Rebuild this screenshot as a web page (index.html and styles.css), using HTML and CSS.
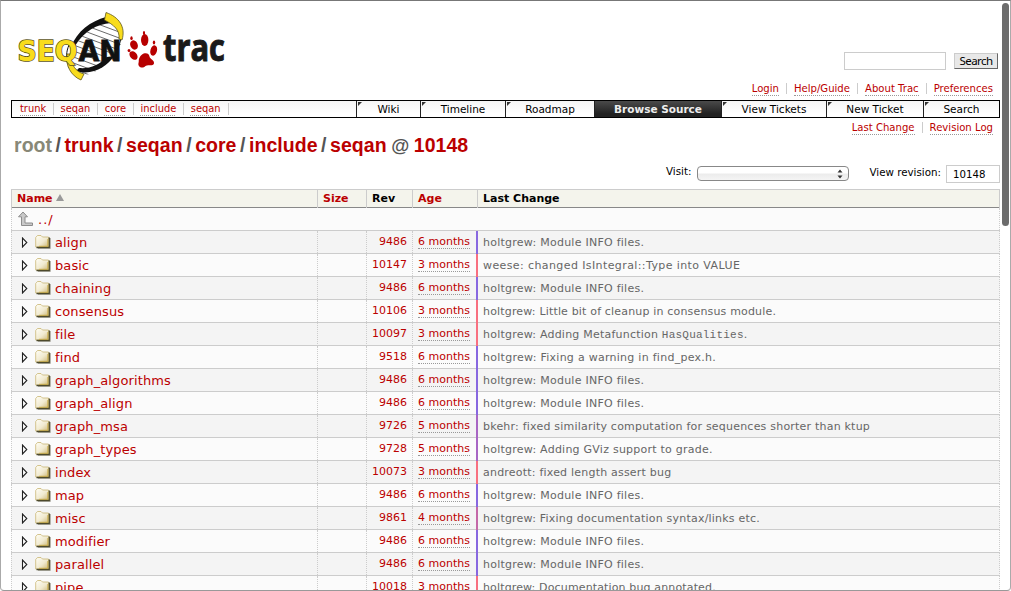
FILE: index.html
```html
<!DOCTYPE html>
<html lang="en">
<head>
<meta charset="utf-8">
<title>seqan/core/include/seqan – SeqAn Trac</title>
<link rel="stylesheet" href="styles.css">
</head>
<body>
<svg class="defs" width="0" height="0" aria-hidden="true">
  <defs>
    <linearGradient id="fold" x1="0" y1="0" x2="1" y2="1"><stop offset="0" stop-color="#fffef6"/><stop offset=".55" stop-color="#f1ead0"/><stop offset="1" stop-color="#cdb878"/></linearGradient>
    <symbol id="folder" viewBox="0 0 16 16">
      <path d="M3 14.500H15.500V4" fill="none" stroke="#b5b4ac" stroke-width="1"/>
      <path d="M.700 3.500 2.500 1.500H6L7.500 3H13.500V13H.700Z" fill="url(#fold)" stroke="#c9b673" stroke-width=".8"/>
      <path d="M1.500 13.500H14.300V3.500" fill="none" stroke="#4d4a2c" stroke-width="1.300"/>
      <path d="M12.800 5V12.300H4" fill="none" stroke="#c6a83e" stroke-width=".8"/>
    </symbol>
    <symbol id="tri" viewBox="0 0 8 11"><path d="M2.500 1V10L6.800 5.500Z" fill="#fff" stroke="#222" stroke-width="1.100"/></symbol>
  </defs>
</svg>
<div class="window">
  <header class="banner">
    <svg class="logo" width="220" height="80" viewBox="10 5 220 80">
      <defs><clipPath id="leaf"><path d="M68 70C66 50 84 27 110 22C124 24 126 38 116 54C106 66 92 76 81 75Z"/></clipPath></defs>
      <path d="M68 70C66 50 84 27 113 22C124 26 126 38 116 54C106 66 92 76 81 75Z" fill="#fff"/>
      <g clip-path="url(#leaf)" stroke="#444" stroke-width=".8">
        <path d="M60 10 130 36M60 16 130 42M60 22 130 48M60 28 130 54M60 34 130 60M60 40 130 66M60 46 130 72M60 52 130 78M60 58 130 84M60 64 130 90"/>
      </g>
      <path d="M71 47C77 31 91 21 106 17L111 23C97 24 84 31 75 46Z" fill="#111"/>
      <path d="M76 71C92 76 107 67 114 56L107 57C99 65 90 69 79 68Z" fill="#111"/>
      <path d="M121 31C122 38 119 48 114 56" fill="none" stroke="#111" stroke-width="1"/>
      <path d="M69 45C66 52 66 58 68 64" fill="none" stroke="#111" stroke-width="1"/>
      <path d="M106 12.500C119 17 126 27 122 40L119 39C120 30 114 25 104.500 20Z" fill="#f8dc1c" stroke="#5d551a" stroke-width=".8"/>
      <path d="M67 54C65 65 71 76 81 80L84 74C76 72 71 65 70 54Z" fill="#f8dc1c" stroke="#5d551a" stroke-width=".8"/>
      <text class="seq" x="17.500" y="61" textLength="60" lengthAdjust="spacingAndGlyphs">SEQ</text>
      <text class="an" x="78.500" y="61" textLength="43" lengthAdjust="spacingAndGlyphs">AN</text>
      <g fill="#b70000">
        <ellipse cx="134" cy="45" rx="3.700" ry="4.800" transform="rotate(-25 134 45)"/>
        <ellipse cx="144.700" cy="40" rx="3.700" ry="6"/>
        <ellipse cx="153.700" cy="50.500" rx="3.300" ry="5.300" transform="rotate(15 153.700 50.500)"/>
        <ellipse cx="133.500" cy="55.500" rx="3.400" ry="4.900" transform="rotate(-40 133.500 55.500)"/>
        <path d="M139 59C141 52 149 51.500 149.500 56.500C150 59 154.500 60 154 63.500C152.500 67 148 64 145.500 66C142 69.500 137.500 66.500 138.500 63C139 61 138.500 60.500 139 59Z"/>
        <ellipse cx="131.500" cy="38.200" rx="1.200" ry="1.900"/><ellipse cx="144" cy="33" rx="1.100" ry="1.900"/><ellipse cx="154" cy="42.500" rx="1.200" ry="1.900"/><ellipse cx="129" cy="50.500" rx="1.400" ry="1.500"/>
      </g>
      <text class="trac" x="163" y="61" textLength="62" lengthAdjust="spacingAndGlyphs">trac</text>
    </svg>
    <div class="tools">
      <form class="search"><input class="field" type="text" aria-label="Search terms"><button class="btn" type="button"><span>Search</span></button></form>
      <nav class="links meta"><a>Login</a><a>Help/Guide</a><a>About Trac</a><a>Preferences</a></nav>
    </div>
  </header>
  <nav class="mainnav">
    <div class="crumbs"><a>trunk</a><a>seqan</a><a>core</a><a>include</a><a>seqan</a></div>
    <div class="tabs"><a class="t1">Wiki</a><a class="t2">Timeline</a><a class="t3">Roadmap</a><a class="t4 active">Browse Source</a><a class="t5">View Tickets</a><a class="t6">New Ticket</a><a class="t7">Search</a></div>
  </nav>
  <nav class="links ctx"><a>Last Change</a><a>Revision Log</a></nav>
  <h1 class="path"><span class="root">root</span><i>/</i>trunk<i>/</i>seqan<i>/</i>core<i>/</i>include<i>/</i>seqan<i class="at">@</i>10148</h1>
  <div class="jump"><span class="visit">Visit:</span><span class="select"><svg width="6" height="10" viewBox="0 0 6 10"><path d="M.500 3.500 3 .500 5.500 3.500ZM.500 6.500 3 9.500 5.500 6.500Z" fill="#333"/></svg></span><span class="viewrev">View revision:</span><span class="revbox">10148</span></div>
  <div class="list" id="list">
    <div class="row head"><span class="sorted">Name <svg width="8" height="8" viewBox="0 0 8 8"><path d="M0 7 4 0 8 7Z" fill="#999"/></svg></span><span class="red">Size</span><span>Rev</span><span class="red">Age</span><span>Last Change</span></div>
    <div class="row up"><span><svg width="17" height="17" viewBox="0 0 17 17"><path d="M6 1 1.500 5.800H4.500V14.500H15.500V12H8V5.800H10.500Z" fill="#c9c9c9" stroke="#8d8d8d" stroke-width="1"/></svg><b>../</b></span></div>
  </div>
  <div class="thumb"></div>
</div>
<script src="rows.js"></script>
</body>
</html>
```
FILE: styles.css
```css
* { box-sizing: border-box; }
html, body { height: 100%; overflow: hidden; }
body { margin: 0; background: #fff; color: #000; font-family: "DejaVu Sans", Verdana, sans-serif; font-size: 11px; }
.defs { display: block; height: 0; }
.window { position: relative; height: 591px; border: 1px solid #aaa; border-top-color: #777; border-bottom-color: #999; border-radius: 0 0 4px 4px; overflow: hidden; padding: 0 10px; display: flex; flex-direction: column; }
.banner { height: 99px; flex: none; display: flex; justify-content: space-between; }
.logo { margin: 4px 0 0 -1px; overflow: visible; }
.seq { font: bold 29px "DejaVu Sans", sans-serif; fill: #f8dc1c; stroke: #5d551a; stroke-width: 1.6px; paint-order: stroke; }
.an { font: bold 29px "DejaVu Sans", sans-serif; fill: #111; stroke: #111; stroke-width: .8px; }
.trac { font: bold 37px "Open Sans", sans-serif; fill: #1a1a1a; stroke: #1a1a1a; stroke-width: 1px; }
.tools { display: flex; flex-direction: column; align-items: flex-end; padding-top: 51px; }
.search { display: flex; gap: 8px; margin-right: 2px; }
.field { width: 102px; height: 18px; border: 1px solid #ccc; padding: 0; }
.btn { width: 44px; height: 16px; margin-top: 1px; border: 1px solid; border-color: #ccc #666 #666 #ccc; background: #e8e8e8; padding: 0; font: 11.5px/12px "Noto Sans", sans-serif; letter-spacing: -.6px; }
.btn span { display: block; margin-top: -1px; }
.links { display: flex; color: #b00; font-size: 10.100px; }
.links a { border-bottom: 1px dotted #999; position: relative; white-space: nowrap; line-height: 12px; height: 13px; }
.links a + a { margin-left: 15px; }
.links a + a::before { content: ""; position: absolute; left: -8px; top: 0; width: 1px; height: 11px; background: #ccc; }
.meta { margin: 13px 7px 0 0; }
.mainnav { flex: none; width: 989px; height: 18px; border: 1px solid #000; background: linear-gradient(#f5f5f5, #fff 80%); display: flex; justify-content: space-between; }
.crumbs { display: flex; color: #b00; font-size: 9.900px; padding-left: 1px; }
.crumbs a { padding: 0 7px; border-right: 1px solid #ccc; height: 12px; margin-top: 2px; line-height: 11px; text-decoration: underline dotted #999 1px; text-underline-offset: 3px; margin-right: -.6px; }
.tabs { display: flex; }
.tabs a { position: relative; border-left: 1px solid #222; text-align: center; line-height: 17px; height: 16px; font-size: 10.500px; }
.tabs a::before { content: ""; position: absolute; left: 1px; top: 1px; border: 2px solid; border-color: #333 transparent transparent #333; }
.tabs .active { background: linear-gradient(#4a4a4a, #222 80%); color: #eee; font-weight: bold; }
.tabs .active::before { display: none; }
.t1 { width: 64px; } .t2 { width: 85px; } .t3 { width: 89px; } .t4 { width: 127px; } .t5 { width: 105px; } .t6 { width: 97px; } .t7 { width: 76px; }
.ctx { flex: none; align-self: flex-end; margin: 4px 7px 0 0; }
.path { flex: none; margin: -2px 0 0 3px; height: 31px; font: bold 19.500px/24px "Liberation Sans", Arial, sans-serif; letter-spacing: .05px; color: #b00; white-space: nowrap; }
.path .root { color: #887; }
.path i { font-style: normal; color: #555; margin: 0 3.500px; }
.path .at { margin: 0 4.500px; font-size: 18.500px; }
.jump { flex: none; display: flex; justify-content: flex-end; height: 25px; font-size: 10.300px; }
.visit { line-height: 14px; margin-right: 6px; }
.select { width: 152px; height: 15px; margin-top: 2px; border: 1px solid #888; border-radius: 4px; background: linear-gradient(#fff 45%, #ececec 55%, #f5f5f5); display: flex; justify-content: flex-end; align-items: center; padding-right: 5px; }
.viewrev { line-height: 16px; margin: 0 5px 0 20px; }
.revbox { width: 54px; height: 18px; border: 1px solid #ccc; line-height: 17px; padding-left: 6px; margin-top: 1px; font-size: 10.200px; }
.list { flex: none; width: 989px; }
.row { display: grid; grid-template-columns: 306px 49px 46px 64px 524px; height: 23px; border-bottom: 1px solid #ccc; background: #fbfbfb; }
.row:nth-child(odd) { background: #f4f4f4; }
.row > span { border-left: 1px dotted #ccc; padding-left: 5px; white-space: nowrap; line-height: 21px; }
.row > span:last-child { border-right: 1px dotted #ccc; }
.row.head { height: 19px; background: #f4f4ec; border-top: 1px solid #ccc; border-bottom: 1px solid #888; font-weight: bold; }
.row.head > span { border-left: 1px solid #ccc; line-height: 18px; }
.row.head > span:last-child { margin-left: 1px; border-right: 1px solid #ccc; }
.row.head .red, .row.head .sorted { color: #b00; }
.row.up { grid-template-columns: 1fr; }
.row.up > span { display: flex; align-items: center; }
.row.up b { font-weight: normal; font-size: 13px; letter-spacing: 1px; color: #b00; margin: 1px 0 0 4px; }
.row .name { display: flex; align-items: center; font-size: 13px; letter-spacing: .12px; color: #b00; padding-left: 8px; }
.name .tri { width: 8px; height: 11px; margin-right: 7px; }
.name .folder { width: 16px; height: 16px; margin-right: 4px; }
.row .rev { color: #b00; text-align: right; padding: 0 5px 0 0; }
.row .age { color: #b00; }
.age a { display: inline-block; height: 14px; line-height: 13px; border-bottom: 1px dotted #999; margin-top: 4px; }
.row .change { border-left: 2px solid var(--age); color: #666; margin-bottom: -1px; line-height: 23px; letter-spacing: var(--track); }
.change code { font-family: "Liberation Mono", "Courier New", monospace; font-size: 11px; }
.thumb { position: absolute; right: 1px; top: 2px; width: 7px; height: 223px; border-radius: 4px; background: #6c6c6c; }
```
FILE: rows.js
```javascript
const colors = { 6: '#8868e0', 5: '#a866c4', 4: '#c468a8', 3: '#f87080' };
// name, revision, age in months, message, letter spacing in px
const entries = [
  ['align', 9486, 6, 'holtgrew: Module INFO files.', .25],
  ['basic', 10147, 3, 'weese: changed IsIntegral::Type into VALUE', .4],
  ['chaining', 9486, 6, 'holtgrew: Module INFO files.', .25],
  ['consensus', 10106, 3, 'holtgrew: Little bit of cleanup in consensus module.', .17],
  ['file', 10097, 3, 'holtgrew: Adding Metafunction <code>HasQualities</code>.', .22],
  ['find', 9518, 6, 'holtgrew: Fixing a warning in find_pex.h.', .27],
  ['graph_algorithms', 9486, 6, 'holtgrew: Module INFO files.', .25],
  ['graph_align', 9486, 6, 'holtgrew: Module INFO files.', .25],
  ['graph_msa', 9726, 5, 'bkehr: fixed similarity computation for sequences shorter than ktup', .21],
  ['graph_types', 9728, 5, 'holtgrew: Adding GViz support to grade.', .24],
  ['index', 10073, 3, 'andreott: fixed length assert bug', .21],
  ['map', 9486, 6, 'holtgrew: Module INFO files.', .25],
  ['misc', 9861, 4, 'holtgrew: Fixing documentation syntax/links etc.', .21],
  ['modifier', 9486, 6, 'holtgrew: Module INFO files.', .25],
  ['parallel', 9486, 6, 'holtgrew: Module INFO files.', .25],
  ['pipe', 10018, 3, 'holtgrew: Documentation bug annotated.', .14]
];
document.getElementById('list').insertAdjacentHTML('beforeend', entries.map(([name, rev, age, text, track]) =>
  `<div class="row"><span class="name"><svg class="tri"><use href="#tri"/></svg><svg class="folder"><use href="#folder"/></svg>${name}</span><span></span><span class="rev">${rev}</span><span class="age"><a>${age} months</a></span><span class="change" style="--age:${colors[age]};--track:${track}px">${text}</span></div>`).join(''));
```
